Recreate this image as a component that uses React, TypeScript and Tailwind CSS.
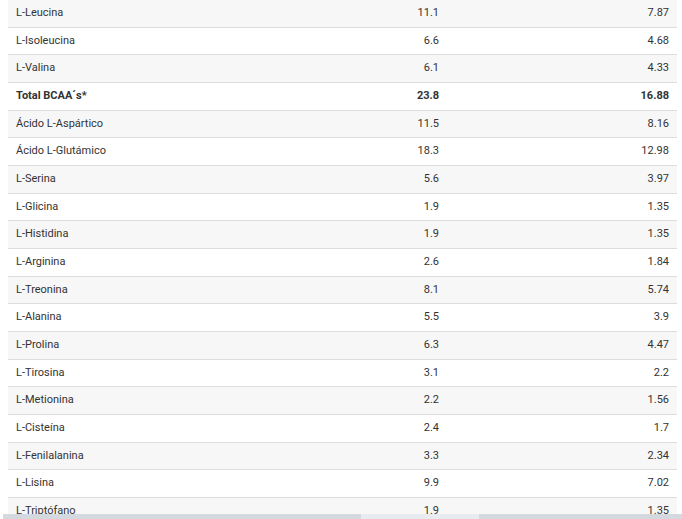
import React from "react";

const rows: [string, string, string, boolean?][] = [
  ["L-Leucina", "11.1", "7.87"],
  ["L-Isoleucina", "6.6", "4.68"],
  ["L-Valina", "6.1", "4.33"],
  ["Total BCAA´s*", "23.8", "16.88", true],
  ["Ácido L-Aspártico", "11.5", "8.16"],
  ["Ácido L-Glutámico", "18.3", "12.98"],
  ["L-Serina", "5.6", "3.97"],
  ["L-Glicina", "1.9", "1.35"],
  ["L-Histidina", "1.9", "1.35"],
  ["L-Arginina", "2.6", "1.84"],
  ["L-Treonina", "8.1", "5.74"],
  ["L-Alanina", "5.5", "3.9"],
  ["L-Prolina", "6.3", "4.47"],
  ["L-Tirosina", "3.1", "2.2"],
  ["L-Metionina", "2.2", "1.56"],
  ["L-Cisteína", "2.4", "1.7"],
  ["L-Fenilalanina", "3.3", "2.34"],
  ["L-Lisina", "9.9", "7.02"],
  ["L-Triptófano", "1.9", "1.35"],
];

export default function App() {
  return (
    <div
      className="w-[682px] h-[519px] bg-white flex flex-col overflow-hidden text-[11px] text-[#333]"
      style={{ fontFamily: "Roboto, 'Liberation Sans', sans-serif" }}
    >
      <div className="flex-1 overflow-hidden pl-[8px] pr-[5px]">
        {rows.map(([name, a, b, bold], i) => (
          <div
            key={name}
            className={`grid grid-cols-[209px_230px_230px] h-[27.67px] items-center border-b border-[#dddddd] ${
              i % 2 === 0 ? "bg-[#f7f7f7]" : "bg-white"
            } ${bold ? "font-bold" : ""}`}
          >
            <div className="pl-[8px] whitespace-nowrap">{name}</div>
            <div className="text-right pr-[8px]">{a}</div>
            <div className="text-right pr-[8px]">{b}</div>
          </div>
        ))}
      </div>
      <div className="h-[5px] flex pl-[3px] shrink-0">
        <div className="w-[358px] bg-[#d4d8df]" />
        <div className="w-[118px] bg-[#e8ebef]" />
        <div className="flex-1 bg-[#d4d8df]" />
      </div>
    </div>
  );
}
